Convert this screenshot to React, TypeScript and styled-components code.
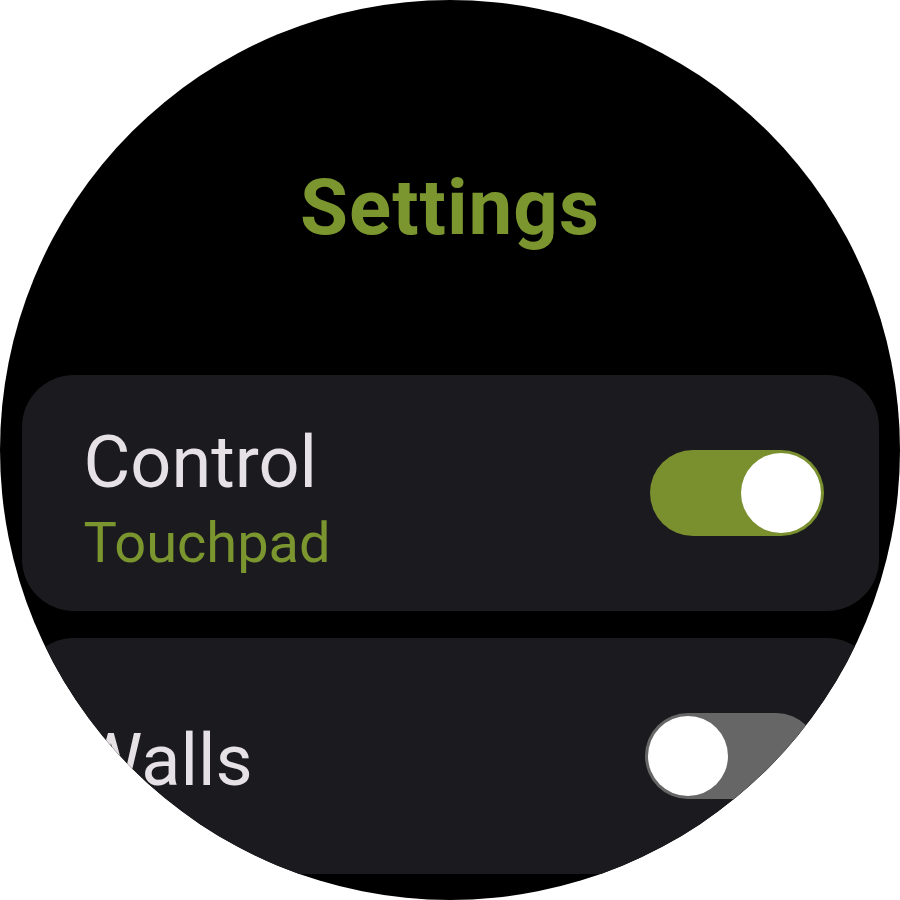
import React from "react";
import styled, { createGlobalStyle } from "styled-components";

const GlobalStyle = createGlobalStyle`
  html, body {
    margin: 0;
    padding: 0;
    background: #ffffff;
  }
  * { box-sizing: border-box; }
`;

const Screen = styled.div`
  width: 900px;
  height: 900px;
  border-radius: 50%;
  background: #000000;
  overflow: hidden;
  display: flex;
  flex-direction: column;
  align-items: center;
  padding-top: 162px;
  font-family: Roboto, "Noto Sans", sans-serif;
`;

const Title = styled.h1`
  margin: 0;
  font-size: 78px;
  line-height: 92px;
  font-weight: 700;
  letter-spacing: 1px;
  color: #7b952f;
`;

const List = styled.div`
  margin-top: 121px;
  width: 857px;
  display: flex;
  flex-direction: column;
  gap: 27px;
`;

const Card = styled.div<{ $edge?: boolean }>`
  height: 236px;
  flex-shrink: 0;
  border-radius: 52px;
  background: #1b1b1f;
  display: flex;
  align-items: center;
  justify-content: space-between;
  padding: ${(p) => (p.$edge ? "0 60px 0 57px" : "0 55px 0 62px")};
`;

const TextBlock = styled.div`
  display: flex;
  flex-direction: column;
  padding-top: 10px;
`;

const Label = styled.div`
  font-size: 72px;
  line-height: 84px;
  color: #e6e1e5;
`;

const Secondary = styled.div`
  margin-top: 6px;
  font-size: 56px;
  line-height: 64px;
  color: #7b952f;
`;

const Track = styled.div<{ $on: boolean }>`
  width: 174px;
  height: 86px;
  border-radius: 43px;
  padding: 3px;
  display: flex;
  justify-content: ${(p) => (p.$on ? "flex-end" : "flex-start")};
  align-items: center;
  background: ${(p) => (p.$on ? "#7a8f2e" : "#666666")};
`;

const Thumb = styled.div`
  width: 80px;
  height: 80px;
  border-radius: 50%;
  background: #ffffff;
`;

const Toggle = ({ on }: { on: boolean }) => (
  <Track $on={on}>
    <Thumb />
  </Track>
);

export default function App() {
  return (
    <>
      <GlobalStyle />
      <Screen>
        <Title>Settings</Title>
        <List>
          <Card>
            <TextBlock>
              <Label>Control</Label>
              <Secondary>Touchpad</Secondary>
            </TextBlock>
            <Toggle on={true} />
          </Card>
          <Card $edge>
            <TextBlock>
              <Label>Walls</Label>
            </TextBlock>
            <Toggle on={false} />
          </Card>
        </List>
      </Screen>
    </>
  );
}
